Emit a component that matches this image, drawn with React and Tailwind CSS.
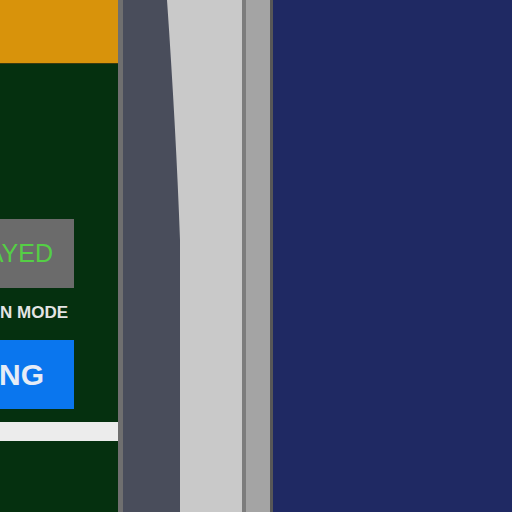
import React from 'react'

const font = { fontFamily: '"Liberation Sans", Arial, sans-serif' }

function StatusButton({ label, className, textClass }) {
  return (
    <div className={`flex items-center justify-end overflow-hidden whitespace-nowrap ${className}`}>
      <span className={textClass}>{label}</span>
    </div>
  )
}

export default function App() {
  return (
    <div className="relative flex w-[512px] h-[512px] overflow-hidden bg-[#1f2963]" style={font}>
      {/* Control panel */}
      <div className="flex flex-col w-[118px] shrink-0">
        <div className="h-[63px] bg-[#d8930b]" />
        <div className="h-px bg-[#3b3a10]" />
        <div className="flex-1 flex flex-col bg-[#05300f]">
          <StatusButton
            label="DELAYED"
            className="mt-[155px] w-[74px] h-[69px] bg-[#6b6b6b] pr-[21px]"
            textClass="text-[25px] text-[#55cf45] leading-none"
          />
          <div className="mt-[16px] w-[68px] flex justify-end overflow-hidden whitespace-nowrap">
            <span className="text-[17px] font-bold leading-none text-[#e4e4e4]">RUN MODE</span>
          </div>
          <StatusButton
            label="RUNNING"
            className="mt-[19px] w-[74px] h-[69px] bg-[#0a76ee] pr-[30px]"
            textClass="text-[30px] font-bold text-[#e6ecf6] leading-none"
          />
          <div className="mt-[13px] h-[19px] bg-[#ececec]" />
        </div>
      </div>

      {/* Bezel */}
      <div className="w-[5px] shrink-0 bg-[#6f6f6f]" />
      <div className="w-[57px] shrink-0 bg-[#494d5b]" />
      <div className="w-[62px] shrink-0 bg-[#c9c9c9]" />
      <div className="w-[4px] shrink-0 bg-[#7c7c7c]" />
      <div className="w-[24px] shrink-0 bg-[#a4a4a4]" />
      <div className="w-[3px] shrink-0 bg-[#575757]" />

      {/* Display */}
      <div className="flex-1 bg-[#1f2963]" />

      {/* Bevel edge of the frame */}
      <svg className="absolute left-[167px] top-0" width="14" height="512" viewBox="0 0 14 512">
        <path d="M0 0 Q9 130 13 240 L13 0 Z" fill="#c9c9c9" />
      </svg>
    </div>
  )
}
